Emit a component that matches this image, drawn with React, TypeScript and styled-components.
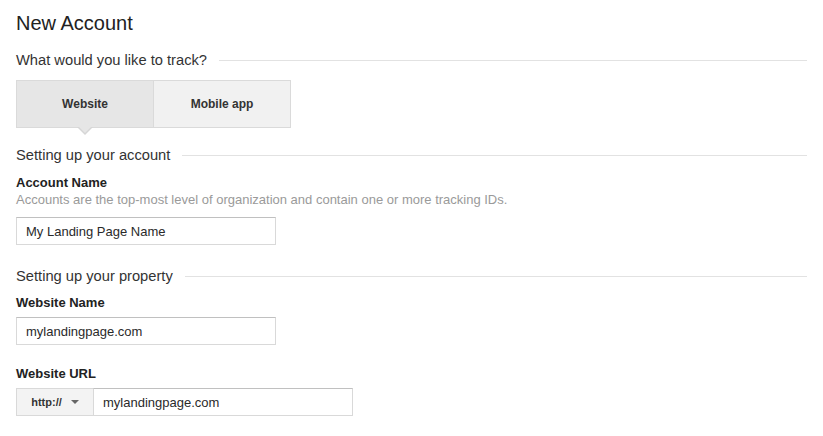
import React from "react";
import styled, { createGlobalStyle } from "styled-components";

const Global = createGlobalStyle`
  html, body { margin: 0; padding: 0; background: #fff; }
  body { font-family: "Liberation Sans", Arial, sans-serif; color: #333; }
  * { box-sizing: border-box; }
`;

const Page = styled.div`
  padding: 11px 16px 0 16px;
  width: 823px;
`;

const Title = styled.h1`
  margin: 0;
  font-size: 20px;
  line-height: 24px;
  font-weight: normal;
  color: #222;
`;

const SectionHeader = styled.div<{ $top: number }>`
  display: flex;
  align-items: center;
  margin-top: ${(p) => p.$top}px;
  font-size: 14.7px;
  line-height: 20px;
  color: #333;
  &::after {
    content: "";
    flex: 1;
    height: 1px;
    background: #e2e2e2;
    margin-left: 12px;
  }
`;

const Tabs = styled.div`
  display: flex;
  margin-top: 10px;
`;

const Tab = styled.div<{ $active?: boolean }>`
  position: relative;
  width: ${(p) => (p.$active ? 138 : 137)}px;
  height: 48px;
  display: flex;
  align-items: center;
  justify-content: center;
  font-size: 12px;
  font-weight: bold;
  color: #333;
  background: ${(p) => (p.$active ? "#e6e6e6" : "#f1f1f1")};
  border: 1px solid #dadada;
  border-left-width: ${(p) => (p.$active ? 1 : 0)}px;
  ${(p) =>
    p.$active &&
    `
    &::before {
      content: "";
      position: absolute;
      left: 50%;
      bottom: -8px;
      margin-left: -8px;
      border-left: 8px solid transparent;
      border-right: 8px solid transparent;
      border-top: 8px solid #d6d6d6;
    }
    &::after {
      content: "";
      position: absolute;
      left: 50%;
      bottom: -6px;
      margin-left: -7px;
      border-left: 7px solid transparent;
      border-right: 7px solid transparent;
      border-top: 7px solid #e6e6e6;
    }
  `}
`;

const Label = styled.div<{ $top: number }>`
  margin-top: ${(p) => p.$top}px;
  font-size: 13px;
  line-height: 16px;
  font-weight: bold;
  color: #222;
`;

const Help = styled.div`
  margin-top: 1px;
  font-size: 13px;
  line-height: 16px;
  color: #9a9a9a;
`;

const Field = styled.div<{ $top: number; $width: number }>`
  margin-top: ${(p) => p.$top}px;
  width: ${(p) => p.$width}px;
  height: 28px;
  display: flex;
  align-items: center;
  padding: 0 9px;
  border: 1px solid #d9d9d9;
  border-top-color: #c0c0c0;
  font-size: 13px;
  color: #2a2a2a;
  background: #fff;
`;

const UrlGroup = styled.div`
  margin-top: 6px;
  display: flex;
  height: 28px;
`;

const Prefix = styled.div`
  width: 77px;
  height: 28px;
  display: flex;
  align-items: center;
  justify-content: center;
  gap: 9px;
  background: #f3f3f3;
  border: 1px solid #d9d9d9;
  border-right: 0;
  font-size: 11px;
  font-weight: bold;
  color: #333;
`;

const Caret = styled.span`
  width: 0;
  height: 0;
  border-left: 4px solid transparent;
  border-right: 4px solid transparent;
  border-top: 4px solid #666;
`;

const UrlInput = styled(Field)`
  margin-top: 0;
`;

export default function App() {
  return (
    <>
      <Global />
      <Page>
        <Title>New Account</Title>
        <SectionHeader $top={15}>What would you like to track?</SectionHeader>
        <Tabs>
          <Tab $active>Website</Tab>
          <Tab>Mobile app</Tab>
        </Tabs>
        <SectionHeader $top={17}>Setting up your account</SectionHeader>
        <Label $top={10}>Account Name</Label>
        <Help>Accounts are the top-most level of organization and contain one or more tracking IDs.</Help>
        <Field $top={9} $width={260}>My Landing Page Name</Field>
        <SectionHeader $top={21}>Setting up your property</SectionHeader>
        <Label $top={9}>Website Name</Label>
        <Field $top={6} $width={260}>mylandingpage.com</Field>
        <Label $top={21}>Website URL</Label>
        <UrlGroup>
          <Prefix>
            http://
            <Caret />
          </Prefix>
          <UrlInput $top={0} $width={260}>mylandingpage.com</UrlInput>
        </UrlGroup>
      </Page>
    </>
  );
}
